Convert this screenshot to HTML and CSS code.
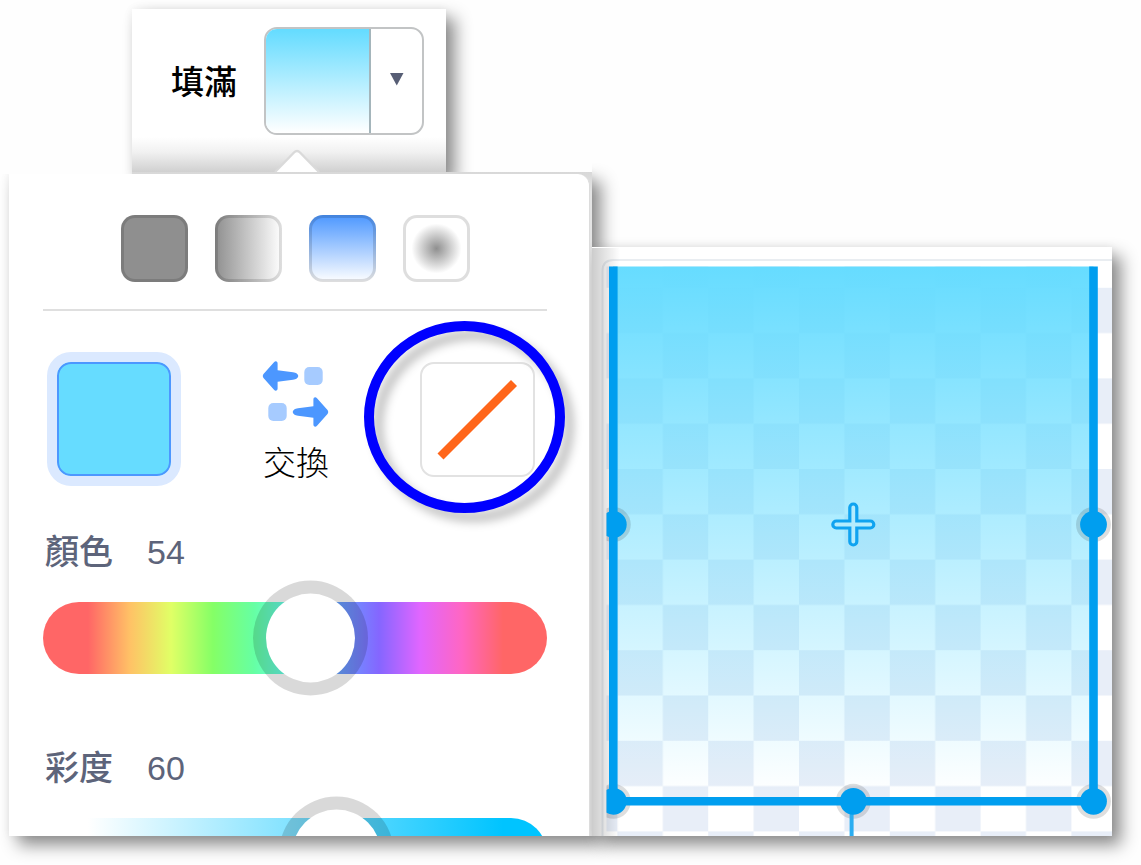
FILE: index.html
```html
<!DOCTYPE html>
<html lang="zh-Hant">
<head>
<meta charset="utf-8">
<title>填滿</title>
<link rel="stylesheet" href="styles.css">
</head>
<body>
<main class="scene">
  <section class="fill-card">
    <span class="fill-label">填滿</span>
    <div class="fill-button">
      <span class="fill-preview"></span>
      <span class="fill-arrow"><svg width="14" height="13" viewBox="0 0 14 13"><path d="M0 0H13.5L6.75 12.5Z" fill="#575e75"/></svg></span>
    </div>
  </section>

  <div class="panel-backing"></div>

  <section class="artboard">
    <svg width="520" height="589" viewBox="592 247 520 589">
      <defs>
        <pattern id="checks" x="617.4" y="287.8" width="90.8" height="90.6" patternUnits="userSpaceOnUse">
          <rect width="90.8" height="90.6" fill="#fff"/>
          <rect width="45.4" height="45.3" fill="#e8eef8"/>
          <rect x="45.4" y="45.3" width="45.4" height="45.3" fill="#e8eef8"/>
        </pattern>
        <linearGradient id="sky" x1="0" y1="0" x2="0" y2="1">
          <stop offset="0" stop-color="#66dcff"/>
          <stop offset="1" stop-color="#66dcff" stop-opacity="0"/>
        </linearGradient>
        <linearGradient id="edge" x1="0" y1="0" x2="1" y2="0">
          <stop offset="0" stop-color="#000" stop-opacity=".2"/>
          <stop offset=".5" stop-color="#000" stop-opacity=".1"/>
          <stop offset="1" stop-color="#000" stop-opacity="0"/>
        </linearGradient>
        <clipPath id="view"><rect x="606.5" y="266.500" width="506" height="570"/></clipPath>
      </defs>
      <rect x="592" y="247" width="520" height="589" fill="#fff"/>
      <path d="M602.5 836V271Q602.5 260 613.500 260H1112" fill="none" stroke="#e9edf1" stroke-width="2"/>
      <g clip-path="url(#view)">
        <rect x="606" y="266" width="506" height="570" fill="url(#checks)"/>
        <rect x="613" y="266" width="480.500" height="530" fill="url(#sky)"/>
      </g>
      <rect x="592" y="248" width="28" height="588" fill="url(#edge)"/>
      <g clip-path="url(#view)">
        <g fill="#000" fill-opacity=".13">
          <circle cx="613.3" cy="524.5" r="17.500"/><circle cx="1093.500" cy="524.5" r="17.500"/>
          <circle cx="613.3" cy="801.3" r="17.500"/><circle cx="853.3" cy="801.3" r="17.500"/><circle cx="1093.500" cy="801.3" r="17.500"/>
        </g>
        <path d="M613.3 260V801.3H1093.500V260" fill="none" stroke="#009eef" stroke-width="8.600"/>
        <path d="M851.6 801V840" stroke="#2badf1" stroke-width="4"/>
        <g fill="#009eef">
          <circle cx="613.3" cy="524.5" r="13.400"/><circle cx="1093.500" cy="524.5" r="13.400"/>
          <circle cx="613.3" cy="801.3" r="13.400"/><circle cx="853.3" cy="801.3" r="13.400"/><circle cx="1093.500" cy="801.3" r="13.400"/>
        </g>
        <g fill="none" stroke-linecap="round">
          <path d="M853.3 507.500V541.500M836.300 524.5H870.300" stroke="#0fa3f0" stroke-width="10.200"/>
          <path d="M853.3 507.500V541.500M836.300 524.5H870.300" stroke="#b4ecfd" stroke-width="3.800"/>
        </g>
      </g>
    </svg>
  </section>

  <section class="panel">
    <div class="modes">
      <span class="mode solid"></span>
      <span class="mode horizontal"></span>
      <span class="mode vertical"></span>
      <span class="mode radial"></span>
    </div>
    <div class="colors">
      <span class="color-current"></span>
      <div class="swap">
        <svg width="68" height="68" viewBox="0 0 68 68">
          <path id="arrow" d="M.8 15Q.8 14 1.500 13.100L12 1.200C13.600 -.5 15.600 .4 15.600 2.500V9.300L31 11.200Q36 12 36.300 15Q36 18 31 18.800L15.600 20.700V27.500C15.600 29.600 13.600 30.500 12 28.800L1.500 16.900Q.8 16 .8 15Z" fill="#4c97ff"/>
          <rect x="42.300" y="6" width="18.400" height="18" rx="5" fill="#a6cbff"/>
          <rect x="6.300" y="42" width="18.400" height="18" rx="5" fill="#a6cbff"/>
          <use href="#arrow" transform="rotate(180 33.500 33)"/>
        </svg>
        <span class="swap-label">交換</span>
      </div>
      <span class="color-none"><svg width="110" height="110" viewBox="0 0 110 110"><path d="M18.500 92.500L92 19" stroke="#ff661a" stroke-width="8.500"/></svg></span>
    </div>
    <div class="slider-label"><span>顏色</span><span class="value">54</span></div>
    <div class="slider hue"><span class="thumb"></span></div>
    <div class="slider-label"><span>彩度</span><span class="value">60</span></div>
    <div class="slider saturation"><span class="thumb"></span></div>
  </section>

  <svg class="pointer-tip" width="46" height="25" viewBox="0 0 46 25"><path d="M1 23L20 3.500Q23 .5 26 3.500L45 23Z" fill="#fff"/><path d="M1 23L20 3.500Q23 .5 26 3.500L45 23" fill="none" stroke="#dadada" stroke-width="2.400"/></svg>
  <div class="highlight"></div>
</main>
</body>
</html>
```
FILE: styles.css
```css
* { box-sizing: border-box; }

body {
  margin: 0;
  background: #fff;
  font-family: "Liberation Sans", "Noto Sans CJK TC", sans-serif;
}

svg { display: block; }

.scene {
  position: relative;
  width: 1141px;
  height: 865px;
  overflow: hidden;
  background: #fefefe;
}

.fill-card, .panel, .panel-backing, .artboard { position: absolute; }

.fill-card, .panel-backing, .artboard {
  box-shadow: 9px 9px 16px rgba(0, 0, 0, .45), 0 0 9px rgba(0, 0, 0, .06);
}

.fill-card {
  left: 132px;
  top: 9px;
  width: 314px;
  height: 166px;
  padding: 18px 22px 0 39px;
  display: flex;
  align-items: flex-start;
  justify-content: space-between;
  background: linear-gradient(#fff 128px, #f1f1f1 143px, #d0d0d0 163px);
}

.fill-label {
  padding-top: 32px;
  font-size: 33px;
  line-height: 48px;
  font-weight: 500;
  color: #000;
}

.fill-button {
  display: flex;
  width: 160px;
  height: 108px;
  border: 2px solid #c2c4c5;
  border-radius: 13px;
  overflow: hidden;
  background: #fff;
}

.fill-preview {
  width: 105px;
  border-right: 2px solid #a4b5bb;
  background: linear-gradient(#66dcff 2%, #fff);
}

.fill-arrow {
  flex: 1;
  display: flex;
  justify-content: center;
  padding-top: 44px;
}

.artboard {
  left: 592px;
  top: 247px;
  width: 520px;
  height: 589px;
}

/* Grey backing that shows round the panel's rounded corner and right edge. */
.panel-backing {
  left: 9px;
  top: 172px;
  width: 583px;
  height: 664px;
  background: linear-gradient(#d8d8d8, #e4e4e4 20px);
  clip-path: polygon(-9px 2px, 123px 2px, 123px 0, 437px 0, 583px 0, 583px -9px, 620px -9px, 620px 720px, -9px 720px);
}

.panel {
  left: 9px;
  top: 174px;
  width: 581px;
  height: 662px;
  padding: 41px 42px 0 34px;
  overflow: hidden;
  background: #fff;
  border-right: 1px solid #dcdcdc;
  border-top-right-radius: 12px;
}

.modes {
  display: flex;
  justify-content: center;
  gap: 27px;
  height: 96px;
  padding-left: 1px;
  border-bottom: 2px solid #dfdfdf;
}

.mode {
  width: 67px;
  height: 67px;
  border: 3px solid rgba(0, 0, 0, .13);
  border-radius: 14px;
}

.solid { background: #8f8f8f; }
.horizontal { background: linear-gradient(90deg, #8f8f8f, #fff) border-box; }
.vertical { background: linear-gradient(#4c97ff, #fff) border-box; }
.radial { background: radial-gradient(circle, #8f8f8f, #fff 25px); }

.colors {
  display: flex;
  justify-content: space-between;
  height: 175px;
  padding: 41px 12px 0 4px;
}

.color-current {
  width: 134px;
  height: 134px;
  border: 10px solid #dbe9ff;
  border-radius: 24px;
  background: #66dcff;
  box-shadow: inset 0 0 0 2px #4c97ff;
}

.swap {
  padding-top: 9px;
  margin-left: -9px;
}

.swap-label {
  display: block;
  padding-left: 1px;
  margin-top: 11px;
  font-size: 33px;
  line-height: 48px;
  font-weight: 300;
  color: #000;
}

.color-none {
  width: 115px;
  height: 115px;
  margin-top: 10px;
  border: 2px solid #e2e2e2;
  border-radius: 14px;
}

.slider-label {
  display: flex;
  height: 48px;
  padding: 0 2px;
  gap: 34px;
  margin-top: 42px;
  font-size: 34px;
  line-height: 48px;
  font-weight: 500;
  color: #5d647a;
}

.value { font-weight: 400; }

.slider {
  height: 72px;
  margin-top: 26px;
  border-radius: 36px;
}

.hue {
  margin-bottom: 70px;
  background: linear-gradient(90deg, hsl(0 100% 70%) 45px, hsl(36 100% 70%) 87px, hsl(72 100% 70%) 128px, hsl(108 100% 70%) 170px, hsl(144 100% 70%) 211px, hsl(180 100% 70%) 253px, hsl(216 100% 70%) 294px, hsl(252 100% 70%) 336px, hsl(288 100% 70%) 377px, hsl(324 100% 70%) 419px, hsl(360 100% 70%) 460px);
}

.saturation { background: linear-gradient(90deg, #fff 45px, #00c4ff 460px); }

.thumb {
  display: block;
  width: 115px;
  height: 115px;
  border: 13.5px solid rgba(0, 0, 0, .15);
  border-radius: 50%;
  background: #fff padding-box;
  transform: translate(210px, -21.5px);
}

.saturation .thumb { transform: translate(236px, -21.5px); }

.pointer-tip {
  position: absolute;
  left: 274px;
  top: 149px;
}

.highlight {
  position: absolute;
  left: 364px;
  top: 321px;
  width: 201px;
  height: 192px;
  border: 10px solid #00f;
  border-radius: 50%;
  filter: drop-shadow(9px 9px 5px rgba(0, 0, 0, .24));
}
```
